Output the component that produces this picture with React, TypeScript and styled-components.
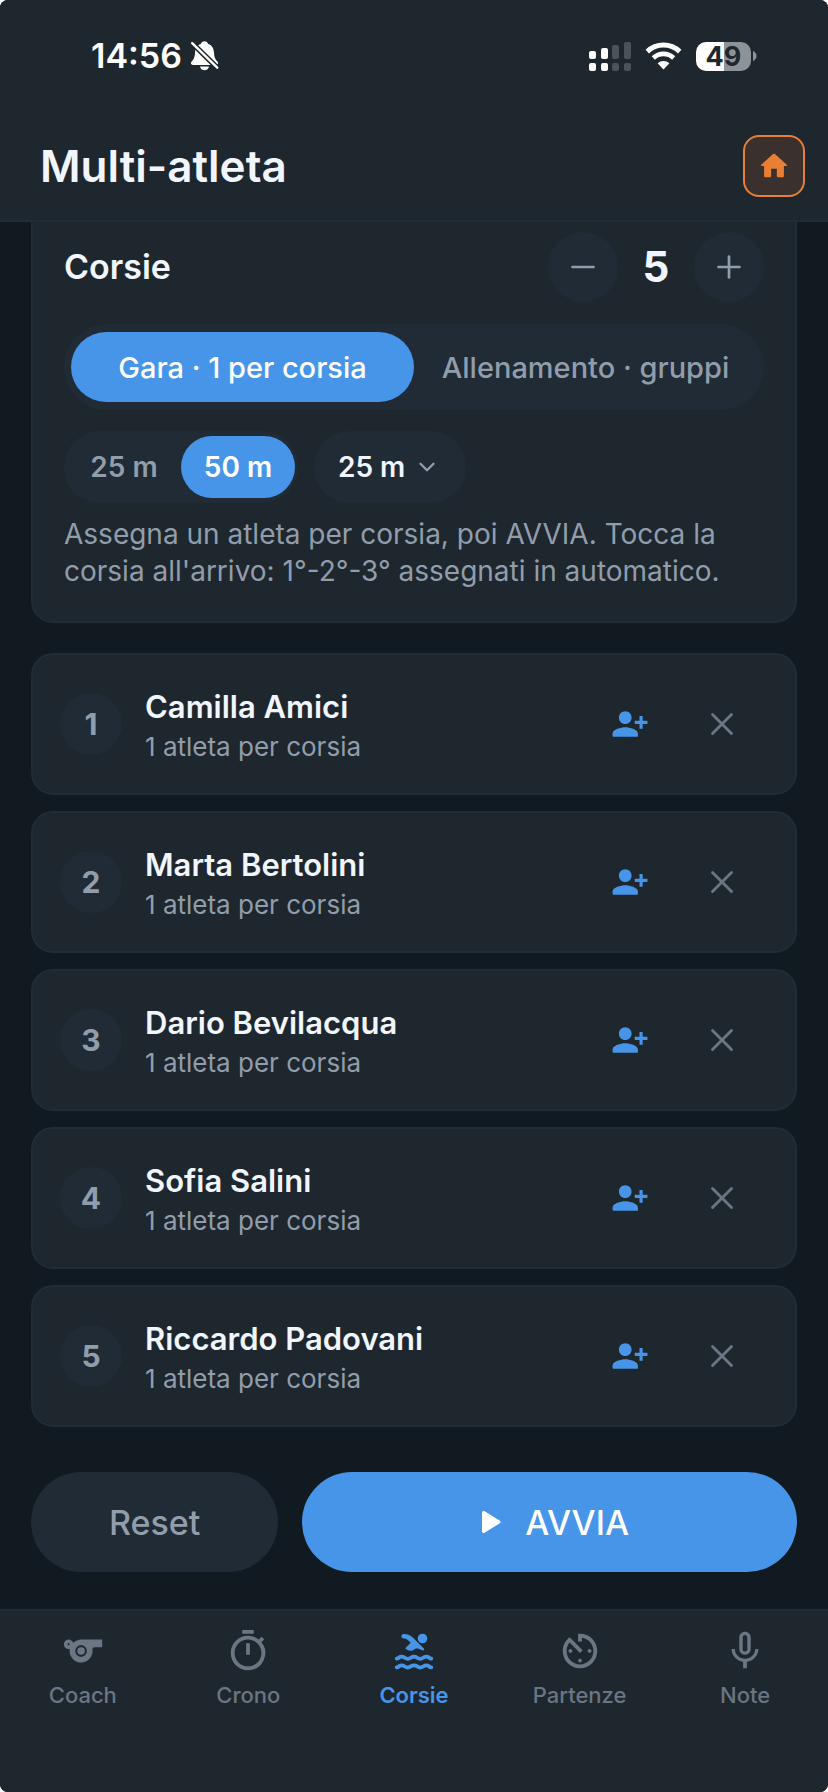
import React, { useState } from "react";
import styled, { createGlobalStyle } from "styled-components";
import { ChevronDown, Minus, Plus, X } from "lucide-react";
import { MdAvTimer, MdMicNone, MdOutlineTimer, MdSports } from "react-icons/md";

const color = {
  page: "#121a21",
  surface: "#1e272e",
  line: "#222c34",
  control: "#202b36",
  accent: "#4795e8",
  text: "#f1f5fd",
  muted: "#929dab",
  dim: "#6b7583",
  orange: "#e87f35",
};

const GlobalStyle = createGlobalStyle`
  * { box-sizing: border-box; }
  body { margin: 0; background: #fff; }
  button, select { font: inherit; border: 0; padding: 0; cursor: pointer; }
  h1, h2, p, ul { margin: 0; padding: 0; }
  svg { display: block; flex: none; }
`;

const Screen = styled.div`
  min-height: 100vh;
  display: flex;
  flex-direction: column;
  overflow: hidden;
  border-radius: 8px;
  background: ${color.page};
  color: ${color.text};
  font-family: Inter, "Liberation Sans", sans-serif;
`;

const Header = styled.header`
  background: ${color.surface};
  border-bottom: 2px solid ${color.line};
`;

const StatusBar = styled.div`
  display: flex;
  align-items: center;
  justify-content: space-between;
  height: 112px;
  padding: 0 71px 0 91px;
  color: #fff;
`;

const StatusGroup = styled.div<{ $gap: number }>`
  display: flex;
  align-items: center;
  gap: ${(p) => p.$gap}px;
`;

const Clock = styled.time`
  font-size: 34px;
  line-height: 40px;
  font-weight: 600;
`;

const Battery = styled.div`
  display: flex;
  align-items: center;
  gap: 1px;
`;

const BatteryBody = styled.span`
  width: 55px;
  height: 29px;
  border-radius: 10px;
  background: linear-gradient(90deg, #fff 50%, #8e9397 50%);
  color: ${color.surface};
  font-size: 27px;
  line-height: 29px;
  font-weight: 700;
  text-align: center;
`;

const TitleBar = styled.div`
  display: flex;
  align-items: center;
  justify-content: space-between;
  height: 108px;
  padding: 0 23px 0 40px;
`;

const Title = styled.h1`
  font-size: 44px;
  line-height: 52px;
  font-weight: 600;
`;

const HomeButton = styled.button`
  display: grid;
  place-items: center;
  width: 62px;
  height: 62px;
  border: 2px solid ${color.orange};
  border-radius: 16px;
  background: #3a302d;
  color: ${color.orange};
`;

const Main = styled.main`
  padding: 0 31px 37px;
`;

const SetupCard = styled.section`
  padding: 10px 31px 31px;
  border: 2px solid ${color.line};
  border-top: 0;
  border-radius: 0 0 22px 22px;
  background: ${color.surface};
`;

const SetupRow = styled.div`
  display: flex;
  align-items: center;
  justify-content: space-between;
`;

const SetupTitle = styled.h2`
  font-size: 34px;
  line-height: 40px;
  font-weight: 600;
`;

const Stepper = styled.div`
  display: flex;
  align-items: center;
`;

const StepButton = styled.button`
  display: grid;
  place-items: center;
  width: 70px;
  height: 70px;
  border-radius: 50%;
  background: ${color.control};
  color: ${color.muted};
`;

const StepValue = styled.output`
  width: 76px;
  font-size: 42px;
  line-height: 50px;
  font-weight: 700;
  text-align: center;
`;

const ModeSwitch = styled.div`
  display: flex;
  margin-top: 22px;
  padding: 8px 7px;
  border-radius: 43px;
  background: ${color.control};
`;

const ModeButton = styled.button<{ $on: boolean }>`
  flex: 1;
  height: 70px;
  border-radius: 35px;
  background: ${(p) => (p.$on ? color.accent : "transparent")};
  color: ${(p) => (p.$on ? "#fff" : color.muted)};
  font-size: 29px;
  font-weight: 500;
  white-space: nowrap;
`;

const DistanceRow = styled.div`
  display: flex;
  gap: 16px;
  margin-top: 21px;
`;

const PoolSwitch = styled.div`
  display: flex;
  padding: 5px 3px;
  border-radius: 36px;
  background: ${color.control};
`;

const PoolButton = styled.button<{ $on: boolean }>`
  width: 114px;
  height: 62px;
  border-radius: 31px;
  background: ${(p) => (p.$on ? color.accent : "transparent")};
  color: ${(p) => (p.$on ? "#fff" : color.muted)};
  font-size: 28px;
  font-weight: 600;
`;

const SelectPill = styled.label`
  display: grid;
  grid-template-columns: 1fr auto;
  align-items: center;
  width: 152px;
  height: 72px;
  border-radius: 36px;
  background: ${color.control};
  color: ${color.muted};

  > * { grid-row: 1; }
  > select { grid-column: 1 / -1; }
  > svg { grid-column: 2; margin-right: 26px; pointer-events: none; }
`;

const DistanceSelect = styled.select`
  appearance: none;
  width: 100%;
  height: 72px;
  padding-left: 24px;
  border-radius: 36px;
  background: transparent;
  color: ${color.text};
  font-size: 28px;
  font-weight: 600;
`;

const Hint = styled.p`
  margin-top: 13px;
  color: ${color.muted};
  font-size: 28px;
  line-height: 37px;
`;

const LaneList = styled.ul`
  display: flex;
  flex-direction: column;
  gap: 16px;
  margin-top: 30px;
  list-style: none;
`;

const LaneCard = styled.li`
  display: flex;
  align-items: center;
  height: 142px;
  padding: 0 27px;
  border: 2px solid ${color.line};
  border-radius: 22px;
  background: ${color.surface};
`;

const LaneNumber = styled.span`
  display: grid;
  place-items: center;
  width: 62px;
  height: 62px;
  border-radius: 50%;
  background: ${color.control};
  color: ${color.muted};
  font-size: 30px;
  font-weight: 700;
`;

const LaneText = styled.div`
  flex: 1;
  margin-left: 23px;
  padding-top: 6px;
`;

const LaneName = styled.p`
  font-size: 31px;
  line-height: 40px;
  font-weight: 600;
`;

const LaneNote = styled.p`
  color: ${color.muted};
  font-size: 26px;
  line-height: 40px;
`;

const LaneAction = styled.button<{ $add?: boolean }>`
  display: grid;
  place-items: center;
  width: 92px;
  height: 92px;
  background: transparent;
  color: ${(p) => (p.$add ? color.accent : color.dim)};
`;

const Actions = styled.div`
  display: flex;
  gap: 24px;
  margin-top: 45px;
`;

const ActionButton = styled.button<{ $primary?: boolean }>`
  display: flex;
  flex: ${(p) => (p.$primary ? 2 : 1)} 1 0;
  align-items: center;
  justify-content: center;
  gap: 24px;
  height: 100px;
  border-radius: 50px;
  background: ${(p) => (p.$primary ? color.accent : color.control)};
  color: ${(p) => (p.$primary ? "#fff" : color.muted)};
  font-size: 34px;
  font-weight: 500;
`;

const TabBar = styled.nav`
  display: flex;
  flex: 1;
  min-height: 183px;
  border-top: 2px solid ${color.line};
  background: ${color.surface};
`;

const Tab = styled.a<{ $on: boolean }>`
  display: flex;
  flex: 1;
  flex-direction: column;
  align-items: center;
  gap: 7px;
  padding-top: 17px;
  color: ${(p) => (p.$on ? color.accent : color.dim)};
  font-size: 22px;
  line-height: 28px;
  font-weight: ${(p) => (p.$on ? 600 : 500)};
  text-decoration: none;
`;

const BellOffIcon = () => (
  <svg width="28" height="30" viewBox="0 0 28 30" aria-hidden="true">
    <mask id="bell-cut" maskUnits="userSpaceOnUse" x="0" y="0" width="28" height="30">
      <rect width="28" height="30" fill="#fff" />
      <path d="M-1 0 28 28.500" stroke="#000" strokeWidth="5.400" />
    </mask>
    <g fill="currentColor" mask="url(#bell-cut)">
      <path d="M13.500.3c2 0 3.200 1.200 3.700 2.700 3.900 1.300 5.600 4.600 5.800 8.700.2 4.300 1 6.300 3.300 8.700 1.500 1.700.8 3.600-1.300 3.600H2c-2.100 0-2.800-1.900-1.300-3.600C3 18 3.800 16 4 11.700 4.200 7.600 5.900 4.300 9.800 3 10.300 1.500 11.500.3 13.500.3z" />
      <path d="M9 25.500h9c-.3 2.200-2.200 3.800-4.500 3.800S9.300 27.700 9 25.500z" />
    </g>
    <path d="M1.200 2.200 26.200 26.700" stroke="currentColor" strokeWidth="2.400" strokeLinecap="round" />
  </svg>
);

const SignalIcon = () => (
  <svg width="42" height="29" viewBox="0 0 42 29" fill="#fff" aria-hidden="true">
    <rect x="0" y="9" width="7" height="8" rx="2" />
    <rect x="12" y="6" width="7" height="11" rx="2" />
    <rect x="0" y="21" width="7" height="8" rx="2" />
    <rect x="12" y="21" width="7" height="8" rx="2" />
    <g fill="#4b535a">
      <rect x="23" y="3" width="7" height="14" rx="2" />
      <rect x="35" y="0" width="7" height="17" rx="2" />
      <rect x="23" y="21" width="7" height="8" rx="2" />
      <rect x="35" y="21" width="7" height="8" rx="2" />
    </g>
  </svg>
);

const WifiIcon = () => (
  <svg width="37" height="28" viewBox="0 0 37 28" fill="none" aria-hidden="true">
    <path d="M2.300 9.600a23.500 23.500 0 0 1 32.400 0" stroke="#fff" strokeWidth="5" />
    <path d="M8.300 16a14.800 14.800 0 0 1 20.400 0" stroke="#fff" strokeWidth="4.600" />
    <path d="M18.500 27.500 12.600 21.300a8.500 8.500 0 0 1 11.800 0z" fill="#fff" />
  </svg>
);

const BatteryTip = () => (
  <svg width="5" height="10" viewBox="0 0 5 10" fill="#8e9397" aria-hidden="true">
    <path d="M1 0c2 .8 3.500 2.700 3.500 5S3 9.200 1 10z" />
  </svg>
);

const HomeIcon = () => (
  <svg width="34" height="34" viewBox="0 0 24 24" fill="currentColor" aria-hidden="true">
    <path d="M10 19v-5h4v5c0 .55.45 1 1 1h3c.55 0 1-.45 1-1v-7h1.700c.46 0 .68-.57.33-.87L12.670 3.600c-.38-.34-.96-.34-1.340 0l-8.360 7.530c-.34.3-.13.87.33.87H5v7c0 .55.45 1 1 1h3c.55 0 1-.45 1-1z" />
  </svg>
);

const AddAthleteIcon = () => (
  <svg width="38" height="38" viewBox="0 0 24 24" fill="currentColor" aria-hidden="true">
    <path d="M13 8c0-2.210-1.790-4-4-4S5 5.790 5 8s1.790 4 4 4 4-1.790 4-4zm2 2v2h3v3h2v-3h3v-2h-3V7h-2v3h-3zM1 18v1.400c0 .35.25.6.6.6h14.800c.35 0 .6-.25.6-.6V18c0-2.660-5.330-4-8-4s-8 1.340-8 4z" />
  </svg>
);

const PlayIcon = () => (
  <svg width="31" height="22" viewBox="-12 0 31 22" fill="currentColor" aria-hidden="true">
    <path d="M0 1.800v18.400c0 1.400 1.400 2.200 2.600 1.500l15-9.300c1.200-.7 1.200-2.100 0-2.800l-15-9.300C1.400-.4 0 .4 0 1.800z" />
  </svg>
);

const SwimmerIcon = ({ size }: { size: number }) => (
  <svg width={size} height={size} viewBox="0 0 46 46" fill="currentColor" aria-hidden="true">
    <circle cx="31.500" cy="10.500" r="4.800" />
    <path d="M12.500 5.900c4-.2 7 1.200 9.600 3.800l10.700 10.700c.8.8.2 2-.8 2-2.200 0-3-1.900-5.800-1.900-3.200 0-3.400 2.300-6.500 2.300-2.200 0-3.200-.9-4.400-1.500-.9-.5-.9-1.300-.3-1.900l4.700-4.700-1-1c-1.800-1.800-3.300-3.200-6-3.200-1.500 0-2.300-.9-2.300-2.200 0-1.200.9-2.300 2.100-2.400z" />
    <g fill="none" stroke="currentColor" strokeWidth="3.800" strokeLinecap="round">
      <path d="M5.700 30.600c2.300-.2 2.400-1.900 4.900-1.900 3.100 0 3.300 2.100 6.200 2.100s3.200-2.100 6.200-2.100 3.300 2.100 6.200 2.100 3.100-2.100 6.200-2.100c2.500 0 2.600 1.700 4.900 1.900" />
      <path d="M5.700 39.300c2.300-.2 2.400-1.900 4.900-1.900 3.100 0 3.300 2.100 6.200 2.100s3.200-2.100 6.200-2.100 3.300 2.100 6.200 2.100 3.100-2.100 6.200-2.100c2.500 0 2.600 1.700 4.900 1.900" />
    </g>
  </svg>
);

const athletes = ["Camilla Amici", "Marta Bertolini", "Dario Bevilacqua", "Sofia Salini", "Riccardo Padovani"];
const modes = ["Gara · 1 per corsia", "Allenamento · gruppi"];
const pools = ["25 m", "50 m"];
const tabs = [
  { label: "Coach", Icon: MdSports },
  { label: "Crono", Icon: MdOutlineTimer },
  { label: "Corsie", Icon: SwimmerIcon },
  { label: "Partenze", Icon: MdAvTimer },
  { label: "Note", Icon: MdMicNone },
];

export default function App() {
  const [mode, setMode] = useState(modes[0]);
  const [pool, setPool] = useState("50 m");

  return (
    <Screen>
      <GlobalStyle />
      <Header>
        <StatusBar>
          <StatusGroup $gap={9}>
            <Clock>14:56</Clock>
            <BellOffIcon />
          </StatusGroup>
          <StatusGroup $gap={14}>
            <SignalIcon />
            <WifiIcon />
            <Battery>
              <BatteryBody>49</BatteryBody>
              <BatteryTip />
            </Battery>
          </StatusGroup>
        </StatusBar>
        <TitleBar>
          <Title>Multi-atleta</Title>
          <HomeButton aria-label="Home">
            <HomeIcon />
          </HomeButton>
        </TitleBar>
      </Header>

      <Main>
        <SetupCard>
          <SetupRow>
            <SetupTitle>Corsie</SetupTitle>
            <Stepper>
              <StepButton aria-label="Meno corsie">
                <Minus size={36} strokeWidth={1.8} />
              </StepButton>
              <StepValue>5</StepValue>
              <StepButton aria-label="Più corsie">
                <Plus size={36} strokeWidth={1.8} />
              </StepButton>
            </Stepper>
          </SetupRow>
          <ModeSwitch>
            {modes.map((m) => (
              <ModeButton key={m} $on={m === mode} aria-pressed={m === mode} onClick={() => setMode(m)}>
                {m}
              </ModeButton>
            ))}
          </ModeSwitch>
          <DistanceRow>
            <PoolSwitch>
              {pools.map((p) => (
                <PoolButton key={p} $on={p === pool} aria-pressed={p === pool} onClick={() => setPool(p)}>
                  {p}
                </PoolButton>
              ))}
            </PoolSwitch>
            <SelectPill>
              <DistanceSelect aria-label="Distanza" defaultValue="25 m">
                <option>25 m</option>
                <option>50 m</option>
              </DistanceSelect>
              <ChevronDown size={26} strokeWidth={2.2} />
            </SelectPill>
          </DistanceRow>
          <Hint>
            Assegna un atleta per corsia, poi AVVIA. Tocca la corsia all'arrivo: 1°-2°-3° assegnati in automatico.
          </Hint>
        </SetupCard>

        <LaneList>
          {athletes.map((name, i) => (
            <LaneCard key={name}>
              <LaneNumber>{i + 1}</LaneNumber>
              <LaneText>
                <LaneName>{name}</LaneName>
                <LaneNote>1 atleta per corsia</LaneNote>
              </LaneText>
              <LaneAction $add aria-label={`Cambia atleta corsia ${i + 1}`}>
                <AddAthleteIcon />
              </LaneAction>
              <LaneAction aria-label={`Rimuovi ${name}`}>
                <X size={38} strokeWidth={1.8} />
              </LaneAction>
            </LaneCard>
          ))}
        </LaneList>

        <Actions>
          <ActionButton>Reset</ActionButton>
          <ActionButton $primary>
            <PlayIcon />
            AVVIA
          </ActionButton>
        </Actions>
      </Main>

      <TabBar>
        {tabs.map(({ label, Icon }) => (
          <Tab key={label} href="#" $on={label === "Corsie"}>
            <Icon size={46} />
            {label}
          </Tab>
        ))}
      </TabBar>
    </Screen>
  );
}
